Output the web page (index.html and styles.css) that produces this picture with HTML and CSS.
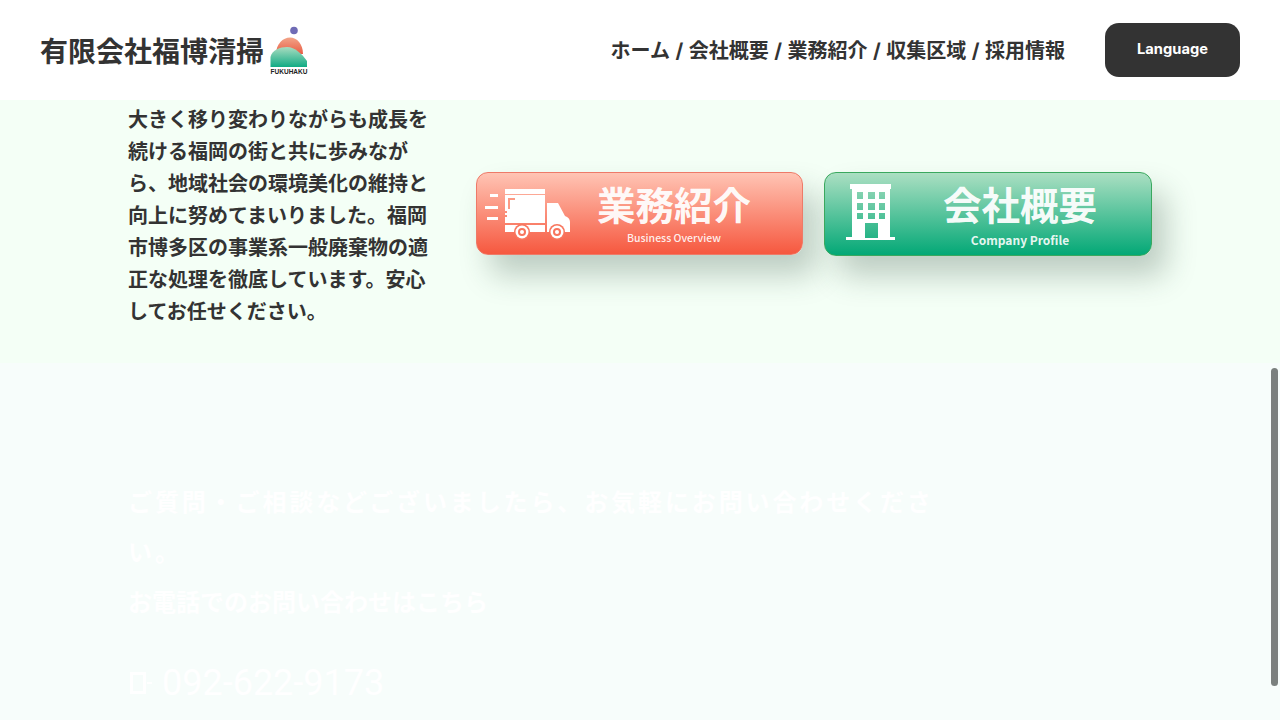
FILE: index.html
```html
<!DOCTYPE html>
<html lang="ja">
<head>
  <meta charset="UTF-8" />
  <meta name="viewport" content="width=device-width, initial-scale=1" />
  <title>有限会社福博清掃</title>
  <link rel="stylesheet" href="styles.css">
</head>
<body>

  <!-- Header -->
  <header class="site-header">
    <a class="brand" href="#">
      <span class="brand-name">有限会社福博清掃</span>
      <span class="brand-logo">
        <svg width="38" height="50" viewBox="0 0 38 50">
          <defs>
            <linearGradient id="logo-sun" x1="0" y1="0" x2="0" y2="1">
              <stop offset="0" stop-color="#f2a488"/>
              <stop offset="1" stop-color="#e85d45"/>
            </linearGradient>
            <linearGradient id="logo-hill" x1="0" y1="0" x2="0" y2="1">
              <stop offset="0" stop-color="#a9dcc0"/>
              <stop offset="1" stop-color="#10ab84"/>
            </linearGradient>
          </defs>
          <circle cx="24" cy="4.5" r="3.8" fill="#6f6bb5"/>
          <path d="M6 28 C6 18 13 11.500 20 11.500 C27 11.500 33 18 33 28 Z" fill="url(#logo-sun)"/>
          <path d="M0.500 41 L0.500 31 C2 24 10 21 17 21 C25 21 32 28 37 35 L37 41 Z" fill="url(#logo-hill)"/>
        </svg>
        <span class="brand-logo-text">FUKUHAKU</span>
      </span>
    </a>
    <nav class="main-nav">
      <a href="#">ホーム</a> / <a href="#">会社概要</a> / <a href="#">業務紹介</a> / <a href="#">収集区域</a> / <a href="#">採用情報</a>
    </nav>
    <button class="lang-btn">Language</button>
  </header>

  <!-- Intro -->
  <section class="intro">
    <p class="intro-text">大きく移り変わりながらも成長を続ける福岡の街と共に歩みながら、地域社会の環境美化の維持と向上に努めてまいりました。福岡市博多区の事業系一般廃棄物の適正な処理を徹底しています。安心してお任せください。</p>
    <div class="link-cards">
      <a class="link-card card-red" href="#">
        <svg class="card-icon" width="86" height="52" viewBox="0 0 86 52" fill="#fff">
          <rect x="5" y="5" width="8" height="3"/>
          <rect y="17" width="13" height="3"/>
          <rect x="2" y="28" width="11" height="3"/>
          <rect x="20" y="0" width="40" height="5"/>
          <path d="M20 6 H60 V34 H20 V28 H22 V26 H20 V24 H22 V22 H20 Z"/>
          <path d="M23 9 H30 V11 H25 V20 H23 Z" fill="#fb9a85"/>
          <rect x="20" y="36" width="40" height="7"/>
          <path d="M62 14 H73 L80 27 C83 28 85 30 85 33 V43 H62 Z"/>
          <circle cx="37" cy="43" r="8" fill="#f8755d"/>
          <circle cx="37" cy="43" r="6.500"/>
          <circle cx="37" cy="43" r="4" fill="#f8755d"/>
          <circle cx="37" cy="43" r="2"/>
          <circle cx="72" cy="43" r="8" fill="#f8755d"/>
          <circle cx="72" cy="43" r="6.500"/>
          <circle cx="72" cy="43" r="4" fill="#f8755d"/>
          <circle cx="72" cy="43" r="2"/>
        </svg>
        <span class="card-label label-red">
          <strong>業務紹介</strong>
          <small>Business Overview</small>
        </span>
      </a>
      <a class="link-card card-green" href="#">
        <svg class="card-icon icon-building" width="50" height="57" viewBox="0 0 50 57" fill="#fff">
          <path fill-rule="evenodd" d="M4 0 H45 V5 H44 V53 H49 V56 H0 V53 H6 V5 H4 Z
            M11 8 V15 H17 V8 Z M22 8 V15 H29 V8 Z M33 8 V15 H39 V8 Z
            M11 19 V26 H17 V19 Z M22 19 V26 H29 V19 Z M33 19 V26 H39 V19 Z
            M11 29 V35 H17 V29 Z M22 29 V35 H29 V29 Z M33 29 V35 H39 V29 Z
            M19 39 V54 H32 V39 Z"/>
        </svg>
        <span class="card-label label-green">
          <strong>会社概要</strong>
          <small>Company Profile</small>
        </span>
      </a>
    </div>
  </section>

  <!-- Contact -->
  <section class="contact">
    <p class="contact-lead">ご質問・ご相談などございましたら、お気軽にお問い合わせください。</p>
    <p class="contact-sub">お電話でのお問い合わせはこちら</p>
    <p class="contact-tel"><span class="tel-icon"></span>092-622-9173</p>
  </section>

  <div class="scroll-thumb"></div>

</body>
</html>
```

FILE: styles.css
```css
html, body {
  height: 720px;
  overflow: hidden;
}

body {
  font-family: "Noto Sans CJK JP", "Noto Sans", sans-serif;
  margin: 0;
  background: #f7fdfb;
  color: #333;
  position: relative;
}

a {
  color: inherit;
  text-decoration: none;
}

.site-header {
  height: 100px;
  box-sizing: border-box;
  background: #fff;
  padding: 0 40px;
  display: flex;
  align-items: center;
}

.brand {
  display: flex;
  align-items: center;
  gap: 6px;
  margin-right: auto;
}

.brand-name {
  font-size: 28px;
  font-weight: 700;
  color: #333;
}

.brand-logo {
  display: flex;
  flex-direction: column;
  align-items: center;
  width: 38px;
  height: 50px;
  position: relative;
  top: 1px;
}

.brand-logo-text {
  position: absolute;
  left: 0;
  bottom: 0;
  width: 38px;
  text-align: center;
  font-family: "Liberation Sans", sans-serif;
  font-size: 6.500px;
  line-height: 8px;
  font-weight: 700;
  color: #222;
}

.main-nav {
  font-family: Inter, "Noto Sans CJK JP", sans-serif;
  font-size: 20px;
  font-weight: 700;
  word-spacing: 0.750px;
  color: #333;
  margin-right: 40px;
  margin-bottom: 2px;
  white-space: pre;
}

.lang-btn {
  width: 135px;
  height: 54px;
  padding: 0 0 2px;
  background: #333;
  color: #fff;
  border: none;
  border-radius: 14px;
  font-family: Inter, sans-serif;
  font-size: 14.700px;
  font-weight: 700;
}

.intro {
  height: 263px;
  box-sizing: border-box;
  background: #f4fff6;
  padding: 3px 128px 0;
  display: flex;
  gap: 48px;
}

.intro-text {
  width: 300px;
  margin: 0;
  font-size: 20px;
  line-height: 32px;
  font-weight: 700;
  color: #333;
}

.link-cards {
  display: flex;
  gap: 21px;
  margin-top: 69px;
  align-items: flex-start;
}

.link-card {
  width: 327px;
  height: 83px;
  box-sizing: border-box;
  border-radius: 12px;
  color: #fff;
  display: flex;
  box-shadow: 14px 20px 30px rgba(40, 70, 55, 0.27);
  position: relative;
}

.card-red {
  background: linear-gradient(#ffc4b4, #f6583f);
  border: 1px solid #ee7a68;
}

.card-green {
  width: 328px;
  height: 84px;
  background: linear-gradient(#abdfc2, #03a876);
  border: 1px solid #3aa85e;
}

.card-icon {
  position: absolute;
  left: 8px;
  top: 16px;
}

.icon-building {
  left: 21px;
  top: 11px;
}

.card-label {
  position: absolute;
  top: 2px;
  display: flex;
  flex-direction: column;
  align-items: center;
}

.label-red {
  left: 120px;
}

.label-green {
  left: 118px;
}

.card-label strong {
  font-size: 38.500px;
  line-height: 56px;
  font-weight: 700;
  color: rgba(255, 255, 255, 0.95);
}

.card-label small {
  font-size: 10.500px;
  line-height: 14px;
  font-weight: 500;
  color: rgba(255, 255, 255, 0.9);
  margin-top: 0;
}

.label-green small {
  font-size: 12px;
  font-weight: 700;
  margin-top: 2px;
}

.contact {
  padding: 113px 128px 0;
}

.contact p {
  margin: 0;
  color: #fff;
  font-weight: 700;
}

.contact-lead {
  width: 812px;
  font-size: 24px;
  line-height: 50px;
  letter-spacing: 2.880px;
}

.contact-sub {
  font-size: 24px;
  line-height: 50px;
}

.contact .contact-tel {
  margin-top: 32px;
  font-family: Roboto, sans-serif;
  font-size: 36px;
  line-height: 50px;
  font-weight: 400;
  display: flex;
  align-items: center;
  gap: 16px;
}

.tel-icon {
  width: 10px;
  height: 16px;
  border: 3px solid #fff;
  margin-left: 2px;
  position: relative;
}

.tel-icon::after {
  content: "";
  position: absolute;
  left: 14px;
  top: 7px;
  width: 5px;
  height: 2px;
  background: #fff;
}

.scroll-thumb {
  position: absolute;
  left: 1271px;
  top: 368px;
  width: 7px;
  height: 318px;
  border-radius: 4px;
  background: #7a807e;
}
```
